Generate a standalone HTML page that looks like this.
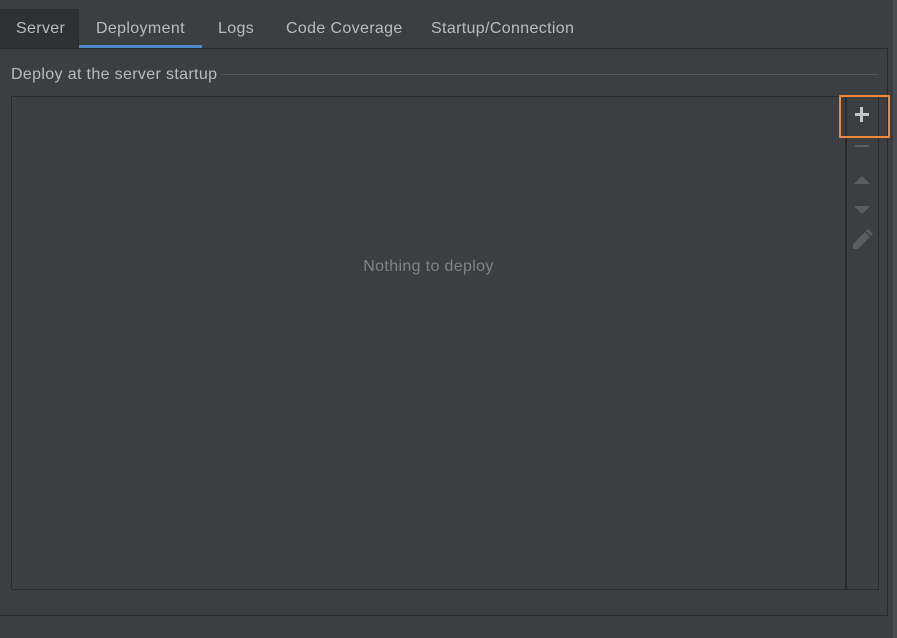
<!DOCTYPE html>
<html><head><style>
body{margin:0;width:897px;height:638px;background:#3c3f41;position:relative;overflow:hidden;font-family:"Liberation Sans",sans-serif;font-size:16px;color:#bbbbbb;letter-spacing:0.35px}
.a{position:absolute}
.tab{position:absolute;top:10px;height:36px;line-height:37px;}
</style></head><body>
<div class="a" style="left:0;top:9px;width:79px;height:39px;background:#2f3234"></div>
<div class="tab" style="left:16px">Server</div>
<div class="tab" style="left:96px">Deployment</div>
<div class="a" style="left:79px;top:45px;width:123px;height:3px;background:#4a88c7"></div>
<div class="tab" style="left:218px">Logs</div>
<div class="tab" style="left:286px">Code Coverage</div>
<div class="tab" style="left:431px">Startup/Connection</div>
<div class="a" style="left:-1px;top:48px;width:888px;height:566px;border:1px solid #2b2b2b;border-left:none"></div>
<div class="a" style="left:11px;top:65px;line-height:20px">Deploy at the server startup</div>
<div class="a" style="left:221px;top:74px;width:657px;height:1px;background:#545759"></div>
<div class="a" style="left:11px;top:96px;width:866px;height:492px;border:1px solid #2b2b2b"></div>
<div class="a" style="left:845px;top:97px;width:2px;height:492px;background:#2b2b2b"></div>
<div class="a" style="left:0;top:257px;width:857px;text-align:center;color:#808284;line-height:20px">Nothing to deploy</div>
<div class="a" style="left:839px;top:95px;width:47px;height:39px;border:2px solid #f0883a;border-radius:1px"></div>
<div class="a" style="left:855px;top:113px;width:14px;height:3px;background:#c5c5c5"></div>
<div class="a" style="left:860px;top:107px;width:3px;height:15px;background:#c5c5c5"></div>
<div class="a" style="left:855px;top:145px;width:14px;height:2px;background:#5b5e60"></div>
<svg class="a" style="left:850px;top:170px" width="24" height="80">
<path d="M4 14 L12 6 L20 14Z" fill="#5b5e60"/>
<path d="M4 36 L12 44 L20 36Z" fill="#5b5e60"/>
<path d="M4 80 L4 75 L16 63 L21 68 L9 80Z M17 62 L19 60 L24 65 L22 67Z" fill="#5b5e60" transform="translate(-1,-1)"/>
</svg>
<div class="a" style="left:893px;top:0;width:4px;height:638px;background:#4a4d4f"></div>
</body></html>
